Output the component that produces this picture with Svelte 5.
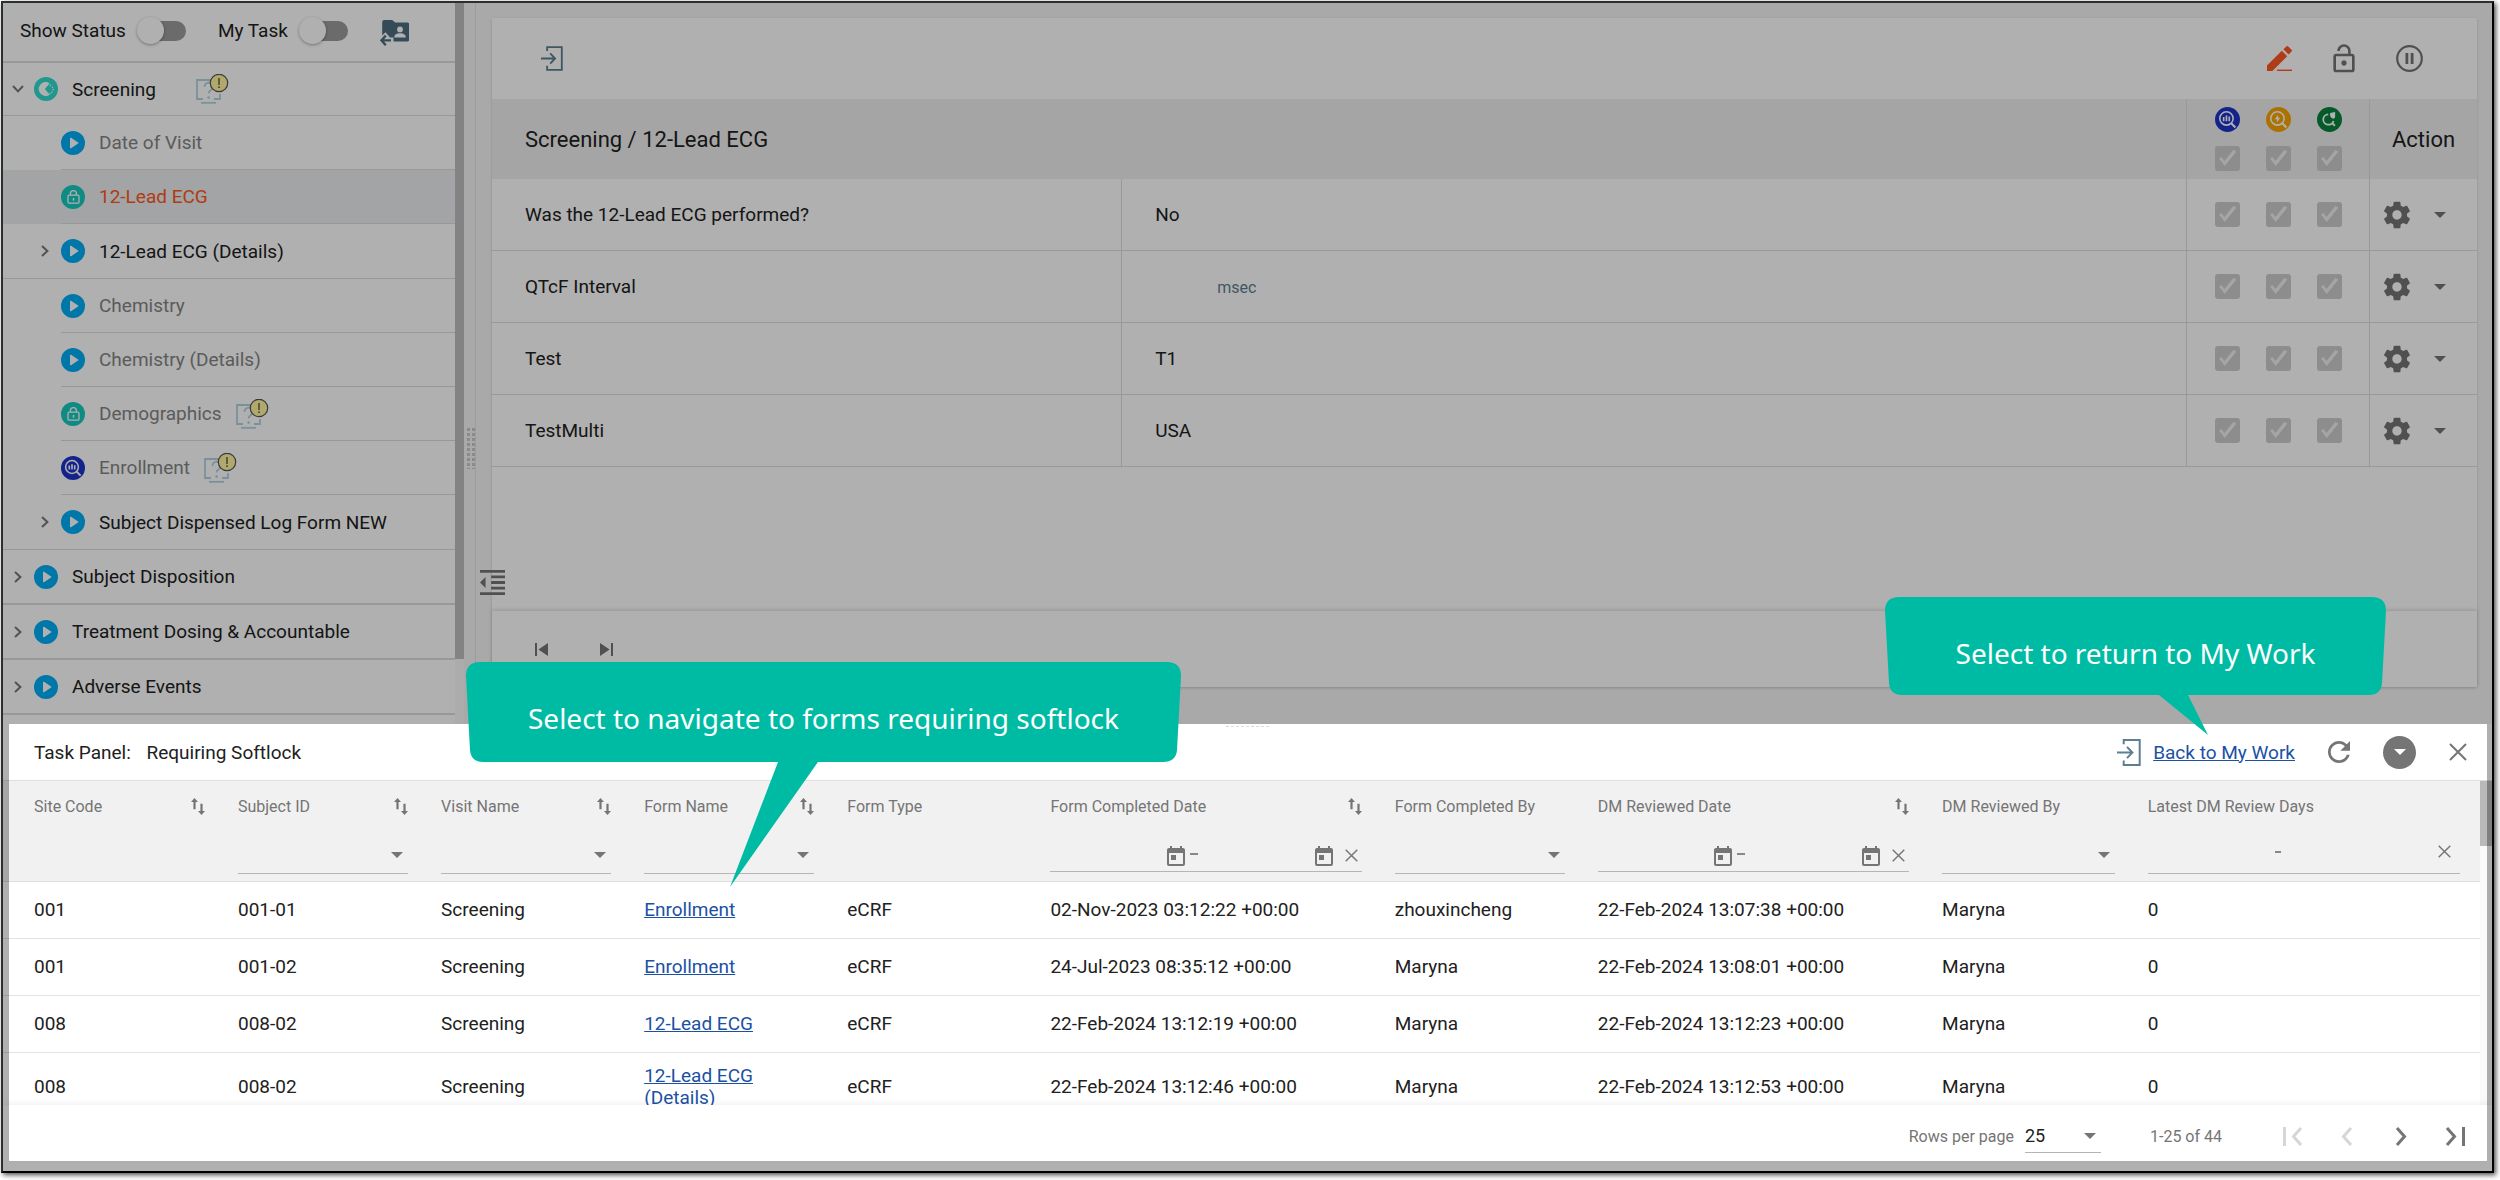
<script lang="ts">
	type Status = 'play' | 'lock' | 'partial' | 'review' | 'verify' | 'sign';

	interface TreeNode {
		label: string;
		status: Status;
		level: number;
		toggle?: 'open' | 'closed';
		query?: boolean;
		active?: boolean;
	}

	interface Column {
		label: string;
		width: string;
		sort?: boolean;
		filter?: 'select' | 'date' | 'range';
	}

	const tree: TreeNode[] = [
		{ label: 'Screening', status: 'partial', level: 0, toggle: 'open', query: true },
		{ label: 'Date of Visit', status: 'play', level: 1 },
		{ label: '12-Lead ECG', status: 'lock', level: 1, active: true },
		{ label: '12-Lead ECG (Details)', status: 'play', level: 1, toggle: 'closed' },
		{ label: 'Chemistry', status: 'play', level: 1 },
		{ label: 'Chemistry (Details)', status: 'play', level: 1 },
		{ label: 'Demographics', status: 'lock', level: 1, query: true },
		{ label: 'Enrollment', status: 'review', level: 1, query: true },
		{ label: 'Subject Dispensed Log Form NEW', status: 'play', level: 1, toggle: 'closed' },
		{ label: 'Subject Disposition', status: 'play', level: 0, toggle: 'closed' },
		{ label: 'Treatment Dosing & Accountable', status: 'play', level: 0, toggle: 'closed' },
		{ label: 'Adverse Events', status: 'play', level: 0, toggle: 'closed' }
	];

	const reviews: { status: Status; name: string }[] = [
		{ status: 'review', name: 'Data review' },
		{ status: 'verify', name: 'Source verification' },
		{ status: 'sign', name: 'Medical review' }
	];

	const fields = [
		{ label: 'Was the 12-Lead ECG performed?', value: 'No' },
		{ label: 'QTcF Interval', value: '', unit: 'msec' },
		{ label: 'Test', value: 'T1' },
		{ label: 'TestMulti', value: 'USA' }
	];

	const columns: Column[] = [
		{ label: 'Site Code', width: '8.8%', sort: true },
		{ label: 'Subject ID', width: '8.2%', sort: true, filter: 'select' },
		{ label: 'Visit Name', width: '8.2%', sort: true, filter: 'select' },
		{ label: 'Form Name', width: '8.2%', sort: true, filter: 'select' },
		{ label: 'Form Type', width: '8.2%' },
		{ label: 'Form Completed Date', width: '13.9%', sort: true, filter: 'date' },
		{ label: 'Form Completed By', width: '8.2%', filter: 'select' },
		{ label: 'DM Reviewed Date', width: '13.9%', sort: true, filter: 'date' },
		{ label: 'DM Reviewed By', width: '8.3%', filter: 'select' },
		{ label: 'Latest DM Review Days', width: '14.1%', filter: 'range' }
	];

	const tasks = [
		['001', '001-01', 'Screening', 'Enrollment', 'eCRF', '02-Nov-2023 03:12:22 +00:00', 'zhouxincheng', '22-Feb-2024 13:07:38 +00:00', 'Maryna', '0'],
		['001', '001-02', 'Screening', 'Enrollment', 'eCRF', '24-Jul-2023 08:35:12 +00:00', 'Maryna', '22-Feb-2024 13:08:01 +00:00', 'Maryna', '0'],
		['008', '008-02', 'Screening', '12-Lead ECG', 'eCRF', '22-Feb-2024 13:12:19 +00:00', 'Maryna', '22-Feb-2024 13:12:23 +00:00', 'Maryna', '0'],
		['008', '008-02', 'Screening', '12-Lead ECG (Details)', 'eCRF', '22-Feb-2024 13:12:46 +00:00', 'Maryna', '22-Feb-2024 13:12:53 +00:00', 'Maryna', '0']
	];

	const FORM_NAME = 3;

	let showStatus = $state(false);
	let myTask = $state(false);
	let pageSize = $state('25');
</script>

{#snippet statusIcon(status: Status)}
	<svg class="status" viewBox="0 0 24 24" aria-hidden="true">
		{#if status === 'play'}
			<circle cx="12" cy="12" r="12" fill="#00adf5" />
			<path d="M9.7 7.4v9.2l7-4.6z" fill="#fff" stroke="#fff" stroke-width="1.4" stroke-linejoin="round" />
		{:else if status === 'lock'}
			<circle cx="12" cy="12" r="12" fill="#16cabf" />
			<rect x="7" y="10.2" width="11" height="8" rx="1.2" fill="none" stroke="#fff" stroke-width="1.3" />
			<path d="M9.4 10V8.6a3 3 0 0 1 6 0V10" fill="none" stroke="#fff" stroke-width="1.3" />
			<path d="M12.5 13v2.6" stroke="#fff" stroke-width="1.5" />
		{:else if status === 'partial'}
			<circle cx="12" cy="12" r="12" fill="#2fdccd" />
			<path d="M15.6 6.2A7 7 0 1 0 15.6 17.8L11 12z" fill="#fff" />
			<path d="M11 12l6-5v10z" fill="#2fdccd" />
			<g fill="#fff">
				<circle cx="16.2" cy="8.2" r=".8" /><circle cx="18.4" cy="10.2" r=".8" /><circle cx="19.2" cy="12.6" r=".8" />
				<circle cx="18" cy="15" r=".8" /><circle cx="16" cy="16.6" r=".8" />
			</g>
		{:else if status === 'review'}
			<circle cx="12" cy="12" r="12" fill="#1d34ca" />
			<circle cx="11" cy="11" r="6.4" fill="none" stroke="#fff" stroke-width="1.5" />
			<path d="M15.6 15.6l4 4" stroke="#fff" stroke-width="2" />
			<path d="M8.3 9.6v4M11 8.2v5.4M13.7 9.2v4.4" stroke="#fff" stroke-width="1.6" />
		{:else if status === 'verify'}
			<circle cx="12" cy="12" r="12" fill="#faa500" />
			<circle cx="11" cy="11" r="6.4" fill="none" stroke="#fff" stroke-width="1.5" />
			<path d="M15.6 15.6l4 4" stroke="#fff" stroke-width="2" />
			<path d="M11.6 7.4l-3.2 4.4h2v3.2l3.2-4.6h-2z" fill="#fff" />
		{:else}
			<circle cx="12" cy="12" r="12" fill="#09833e" />
			<path d="M10.8 7a5 5 0 1 0 5 6.4" fill="none" stroke="#fff" stroke-width="1.7" />
			<path d="M14.6 15.4l2.6 2.6" stroke="#fff" stroke-width="1.8" />
			<path d="M12.6 5.8l4.8-.9 0 4.6a3 3 0 0 1-1.8 1.8 4 4 0 0 1-3-2.6z" fill="#fff" />
		{/if}
	</svg>
{/snippet}

{#snippet queryIcon()}
	<svg class="query" viewBox="0 0 33 30" aria-hidden="true">
		<path d="M14 6H1v19h6M18 25h6v-5M24 20v5" fill="none" stroke="#b2d3df" stroke-width="1.8" />
		<path d="M8.6 13a4 4 0 1 1 6 3.2q-2 1.2-2 3.4" fill="none" stroke="#b2d3df" stroke-width="1.7" />
		<circle cx="12.6" cy="23.6" r="1.3" fill="#b2d3df" />
		<path d="M5 28.8h15" stroke="#b2d3df" stroke-width="1.8" />
		<circle cx="23" cy="9" r="8.7" fill="#fff59b" stroke="#555" stroke-width="1.2" />
		<path d="M23 4v7" stroke="#555" stroke-width="1.4" />
		<circle cx="23" cy="13.2" r=".9" fill="#555" />
	</svg>
{/snippet}

{#snippet enterIcon()}
	<svg viewBox="0 0 24 27" aria-hidden="true" fill="none" stroke="#5d7f8f" stroke-width="2">
		<path d="M6.7 5.2V1.1h16v24.8h-16v-4.4" />
		<path d="M0 13.5h15M10 7.9l5.4 5.6L10 19.1" />
	</svg>
{/snippet}

{#snippet caret()}
	<svg class="caret" viewBox="0 0 12 6" aria-hidden="true"><path d="M0 0h12L6 6z" fill="currentColor" /></svg>
{/snippet}

{#snippet cross()}
	<svg class="cross" viewBox="0 0 18 18" aria-hidden="true">
		<path d="M1 1l16 16M17 1L1 17" fill="none" stroke="currentColor" stroke-width="2" />
	</svg>
{/snippet}

{#snippet calendar()}
	<svg class="calendar" viewBox="3 1 18 20" aria-hidden="true">
		<path
			fill="currentColor"
			d="M19 3h-1V1h-2v2H8V1H6v2H5c-1.11 0-1.99.9-1.99 2L3 19c0 1.1.89 2 2 2h14c1.1 0 2-.9 2-2V5c0-1.1-.9-2-2-2zm0 16H5V8h14v11zM7 10h5v5H7z"
		/>
	</svg>
{/snippet}

<div class="page">
	<div class="frame">
		<div class="workspace">
			<aside class="sidebar">
				<div class="switches">
					<label class="switch">Show Status <input type="checkbox" role="switch" bind:checked={showStatus} /></label>
					<label class="switch">My Task <input type="checkbox" role="switch" bind:checked={myTask} /></label>
					<button class="subject" aria-label="Back to subjects">
						<svg viewBox="0 0 29 27" aria-hidden="true">
							<path
								fill="#4d6f80"
								d="M4.2 0h8l3 2.4h12a2 2 0 0 1 2 2v15a2 2 0 0 1-2 2H13.5v-4H10l-4.5-5.2-3.3 3.4V2a2 2 0 0 1 2-2z"
							/>
							<circle cx="20" cy="9.4" r="2.9" fill="#fff" />
							<path d="M14.2 17.6c0-3.4 2.8-4.4 5.8-4.4s5.8 1 5.8 4.4z" fill="#fff" />
							<path d="M5.8 15.6L1.4 20.4l4.4 4.8M1.4 20.4H11" fill="none" stroke="#fff" stroke-width="4.4" />
							<path d="M5.8 15.6L1.4 20.4l4.4 4.8M1.4 20.4H11" fill="none" stroke="#4d6f80" stroke-width="2.3" />
						</svg>
					</button>
				</div>
				<ul class="tree">
					{#each tree as node}
						<li class="node level-{node.level}" class:active={node.active} class:group={node.toggle} class:open={node.toggle === 'open'}>
							<span class="twisty">
								{#if node.toggle}
									<button aria-label="Toggle {node.label}">
										<svg viewBox="0 0 8 12" class:down={node.toggle === 'open'} aria-hidden="true">
											<path d="M1 1l5.4 5L1 11" fill="none" stroke="#777" stroke-width="2" />
										</svg>
									</button>
								{/if}
							</span>
							<button class="entry">
								{@render statusIcon(node.status)}
								<span class="name">{node.label}</span>
								{#if node.query}{@render queryIcon()}{/if}
							</button>
						</li>
					{/each}
				</ul>
			</aside>
			<div class="side-scroll"><div></div></div>
			<div class="splitter"><div class="grip"></div></div>

			<main>
				<button class="collapse" aria-label="Collapse navigation">
					<svg viewBox="3 3 18 18" aria-hidden="true">
						<path fill="#757575" d="M11 17h10v-2H11v2zm-8-5l4 4V8l-4 4zm0 9h18v-2H3v2zM3 3v2h18V3H3zm8 6h10V7H11v2zm0 4h10v-2H11v2z" />
					</svg>
				</button>
				<section class="card">
					<div class="toolbar">
						<button class="enter" aria-label="Exit form">{@render enterIcon()}</button>
						<div class="tools">
							<button aria-label="Edit">
								<svg width="25" height="25" viewBox="0 0 25 25" aria-hidden="true">
									<path fill="#ff5722" d="M0 25v-5.6L14.8 4.8l5.4 5.4L5.4 25zM16.4 3.3L19.6.3q.7-.5 1.4 0l3.8 3.8q.4.6 0 1.2l-3.2 3.2z" />
									<path d="M10 24.3h15" stroke="#ff5722" stroke-width="1.4" />
								</svg>
							</button>
							<button aria-label="Unlock">
								<svg width="32" height="32" viewBox="0 0 24 24" aria-hidden="true">
									<path
										fill="#757575"
										d="M12 17c1.1 0 2-.9 2-2s-.9-2-2-2-2 .9-2 2 .9 2 2 2zm6-9h-1V6c0-2.76-2.24-5-5-5S7 3.24 7 6h1.9c0-1.71 1.39-3.1 3.1-3.1 1.71 0 3.1 1.39 3.1 3.1v2H6c-1.1 0-2 .9-2 2v10c0 1.1.9 2 2 2h12c1.1 0 2-.9 2-2V10c0-1.1-.9-2-2-2zm0 12H6V10h12v10z"
									/>
								</svg>
							</button>
							<button aria-label="Pause">
								<svg width="27" height="27" viewBox="0 0 27 27" aria-hidden="true" fill="none" stroke="#757575">
									<circle cx="13.5" cy="13.5" r="12.3" stroke-width="2.2" />
									<path d="M10.9 8v11M16.1 8v11" stroke-width="2.8" />
								</svg>
							</button>
						</div>
					</div>

					<table class="form">
						<colgroup>
							<col class="c-label" />
							<col />
							<col class="c-checks" />
							<col class="c-action" />
						</colgroup>
						<thead>
							<tr>
								<th colspan="2" scope="col">Screening / 12-Lead ECG</th>
								<th scope="col" class="checks">
									<div class="trio icons">
										{#each reviews as review}{@render statusIcon(review.status)}{/each}
									</div>
									<div class="trio">
										{#each reviews as review}
											<input type="checkbox" checked disabled aria-label="{review.name}, all fields" />
										{/each}
									</div>
								</th>
								<th scope="col" class="action">Action</th>
							</tr>
						</thead>
						<tbody>
							{#each fields as field}
								<tr>
									<td>{field.label}</td>
									<td class="value">{field.value}{#if field.unit}<span class="unit">{field.unit}</span>{/if}</td>
									<td class="checks">
										<div class="trio">
											{#each reviews as review}
												<input type="checkbox" checked disabled aria-label="{review.name}, {field.label}" />
											{/each}
										</div>
									</td>
									<td class="actions">
										<div class="gear">
											<button aria-label="Settings for {field.label}">
												<svg width="32" height="32" viewBox="0 0 24 24" aria-hidden="true">
													<path
														fill="#757575"
														d="M19.43 12.98c.04-.32.07-.64.07-.98s-.03-.66-.07-.98l2.11-1.65c.19-.15.24-.42.12-.64l-2-3.46c-.12-.22-.39-.3-.61-.22l-2.49 1c-.52-.4-1.08-.73-1.69-.98l-.38-2.65C14.46 2.18 14.25 2 14 2h-4c-.25 0-.46.18-.49.42l-.38 2.65c-.61.25-1.17.59-1.69.98l-2.49-1c-.23-.09-.49 0-.61.22l-2 3.46c-.13.22-.07.49.12.64l2.11 1.65c-.04.32-.07.65-.07.98s.03.66.07.98l-2.11 1.65c-.19.15-.24.42-.12.64l2 3.46c.12.22.39.3.61.22l2.49-1c.52.4 1.08.73 1.69.98l.38 2.65c.03.24.24.42.49.42h4c.25 0 .46-.18.49-.42l.38-2.65c.61-.25 1.17-.59 1.69-.98l2.49 1c.23.09.49 0 .61-.22l2-3.46c.12-.22.07-.49-.12-.64l-2.11-1.65zM12 15.5c-1.93 0-3.5-1.57-3.5-3.5s1.57-3.5 3.5-3.5 3.5 1.57 3.5 3.5-1.57 3.5-3.5 3.5z"
													/>
												</svg>
											</button>
											<button aria-label="More for {field.label}">{@render caret()}</button>
										</div>
									</td>
								</tr>
							{/each}
						</tbody>
					</table>

					<div class="card-footer">
						<button aria-label="Previous form">
							<svg width="13" height="13" viewBox="0 0 13 13" aria-hidden="true"><path fill="#757575" d="M0 0h2v13H0zM13 0v13L3.4 6.5z" /></svg>
						</button>
						<button aria-label="Next form">
							<svg width="13" height="13" viewBox="0 0 13 13" aria-hidden="true"><path fill="#757575" d="M11 0h2v13h-2zM0 0v13l9.6-6.5z" /></svg>
						</button>
					</div>
				</section>
			</main>
		</div>

		<section class="task-panel">
			<div class="handle"></div>
			<header>
				<h2>Task Panel: <span>Requiring Softlock</span></h2>
				<div class="panel-tools">
					<a class="back" href="#my-work">{@render enterIcon()}<span>Back to My Work</span></a>
					<button aria-label="Refresh">
						<svg width="22" height="22" viewBox="4 4 16 16" aria-hidden="true">
							<path
								fill="#757575"
								d="M17.65 6.35C16.2 4.9 14.21 4 12 4c-4.42 0-7.99 3.58-7.99 8s3.57 8 7.99 8c3.73 0 6.84-2.55 7.73-6h-2.08c-.82 2.33-3.04 4-5.65 4-3.31 0-6-2.69-6-6s2.69-6 6-6c1.66 0 3.14.69 4.22 1.78L13 11h7V4l-2.35 2.35z"
							/>
						</svg>
					</button>
					<button class="minimize" aria-label="Minimize">{@render caret()}</button>
					<button aria-label="Close">{@render cross()}</button>
				</div>
			</header>

			<div class="table-area">
				<div class="table-clip">
					<table class="tasks">
						<colgroup>
							{#each columns as column}<col style:width={column.width} />{/each}
						</colgroup>
						<thead>
							<tr>
								{#each columns as column}
									<th scope="col">
										<div class="head">
											<span>{column.label}</span>
											{#if column.sort}
												<button aria-label="Sort by {column.label}">
													<svg width="14" height="17" viewBox="0 0 14 17" aria-hidden="true">
														<path fill="#757575" d="M3.5 0L7 4H4.6v7.2H2.4V4H0zM10.5 17L7 13h2.4V5.8h2.2V13H14z" />
													</svg>
												</button>
											{/if}
										</div>
										<div class="filter">
											{#if column.filter === 'select'}
												<div class="line">
													<select aria-label="Filter {column.label}"><option></option></select>
													{@render caret()}
												</div>
											{:else if column.filter === 'date'}
												<div class="line date">
													<input type="text" aria-label="{column.label} from" />
													<button aria-label="Pick start date">{@render calendar()}</button>
													<i class="dash"></i>
													<input type="text" aria-label="{column.label} to" />
													<button aria-label="Pick end date">{@render calendar()}</button>
													<button class="clear" aria-label="Clear {column.label}">{@render cross()}</button>
												</div>
											{:else if column.filter === 'range'}
												<div class="line range">
													<input class="min" type="text" aria-label="{column.label} min" />
													<i class="dash"></i>
													<input type="text" aria-label="{column.label} max" />
													<button class="clear" aria-label="Clear {column.label}">{@render cross()}</button>
												</div>
											{/if}
										</div>
									</th>
								{/each}
							</tr>
						</thead>
						<tbody>
							{#each tasks as task}
								<tr>
									{#each task as cell, i}
										<td>{#if i === FORM_NAME}<a href="#form">{cell}</a>{:else}{cell}{/if}</td>
									{/each}
								</tr>
							{/each}
						</tbody>
					</table>
				</div>
				<div class="panel-scroll"><div></div></div>
			</div>

			<footer>
				<label class="page-size">
					Rows per page
					<span class="line">
						<select bind:value={pageSize}>
							<option>25</option>
							<option>50</option>
						</select>
						{@render caret()}
					</span>
				</label>
				<span class="range-text">1-25 of 44</span>
				<nav class="pager">
					<button disabled aria-label="First page">
						<svg width="20" height="19" viewBox="0 0 20 19" aria-hidden="true"><path d="M1.5 0v19M18 1L10.5 9.5 18 18" /></svg>
					</button>
					<button disabled aria-label="Previous page">
						<svg width="12" height="19" viewBox="0 0 12 19" aria-hidden="true"><path d="M10 1L2.5 9.5 10 18" /></svg>
					</button>
					<button aria-label="Next page">
						<svg width="12" height="19" viewBox="0 0 12 19" aria-hidden="true"><path d="M2 1l7.5 8.5L2 18" /></svg>
					</button>
					<button aria-label="Last page">
						<svg width="20" height="19" viewBox="0 0 20 19" aria-hidden="true"><path d="M2 1l7.5 8.5L2 18M18.5 0v19" /></svg>
					</button>
				</nav>
			</footer>
			<div class="spotlight"></div>
		</section>

		<div class="callout forms">
			<svg width="715" height="225" viewBox="0 0 715 225" aria-hidden="true">
				<path d="M14 0H701Q715 0 715 14L711 88Q710 100 697 100H352L264 225 312 100H17Q5 100 4 88L0 14Q0 0 14 0z" />
			</svg>
			<p>Select to navigate to forms requiring softlock</p>
		</div>
		<div class="callout work">
			<svg width="501" height="138" viewBox="0 0 501 138" aria-hidden="true">
				<path d="M14 0H487Q501 0 501 14L497 86Q496 98 484 98H303L323 138 274 98H17Q5 98 4 86L0 14Q0 0 14 0z" />
			</svg>
			<p>Select to return to My Work</p>
		</div>
	</div>
</div>

<style>
	:global(body) {
		margin: 0;
		background: #fff;
	}

	.page {
		box-sizing: border-box;
		min-height: 100vh;
		padding: 1px 6px 7px 1px;
		display: flex;
		font-family: Roboto, 'Liberation Sans', sans-serif;
		font-size: 19px;
		color: #212121;
	}

	.page :global(*) {
		box-sizing: border-box;
	}

	.frame {
		position: relative;
		flex: 1;
		min-width: 0;
		display: flex;
		flex-direction: column;
		overflow: hidden;
		border: 2px solid #000;
		border-top-color: #2b302f;
		border-left-color: #2b302f;
		background: #f5f5f5;
		box-shadow: 2px 2px 5px rgba(0, 0, 0, 0.7);
	}

	button {
		display: inline-flex;
		align-items: center;
		justify-content: center;
		padding: 0;
		border: 0;
		background: none;
		color: #757575;
		font: inherit;
	}

	svg {
		display: block;
		flex-shrink: 0;
	}

	.caret {
		width: 12px;
		height: 6px;
	}

	.cross {
		width: 18px;
		height: 18px;
	}

	.calendar {
		width: 18px;
		height: 20px;
	}

	.status {
		width: 24px;
		height: 24px;
	}

	/* workspace */
	.workspace {
		flex: 1;
		display: flex;
	}

	.sidebar {
		width: 452px;
		flex-shrink: 0;
		background: #fff;
	}

	.switches {
		display: flex;
		align-items: center;
		height: 60px;
		padding: 0 0 3px 17px;
		border-bottom: 2px solid #dedede;
	}

	.switch {
		display: flex;
		align-items: center;
		gap: 11px;
		margin-right: 32px;
		white-space: nowrap;
	}

	.switch input {
		appearance: none;
		position: relative;
		width: 49px;
		height: 28px;
		margin: 0;
	}

	.switch input::before {
		content: '';
		position: absolute;
		inset: 4px 0 4px 7px;
		border-radius: 10px;
		background: #9b9b9b;
	}

	.switch input::after {
		content: '';
		position: absolute;
		left: 0;
		top: 0;
		width: 27px;
		height: 27px;
		border-radius: 50%;
		background: #fff;
		box-shadow: 0 1px 3px rgba(0, 0, 0, 0.35);
	}

	.subject {
		padding-top: 6px;
	}

	.subject svg {
		width: 29px;
		height: 27px;
	}

	.tree {
		list-style: none;
		margin: 0;
		padding: 0;
	}

	.node {
		display: flex;
		height: 54px;
	}

	.twisty {
		display: flex;
		align-items: center;
		justify-content: center;
		width: 31px;
		padding-right: 1px;
		flex-shrink: 0;
	}

	.level-1 .twisty {
		width: 58px;
		padding-left: 26px;
	}

	.twisty svg {
		width: 8px;
		height: 12px;
	}

	.twisty svg.down {
		transform: rotate(90deg);
	}

	.entry {
		flex: 1;
		justify-content: flex-start;
		gap: 14px;
		border-bottom: 1px solid #dcdcdc;
		color: #858585;
	}

	.group {
		height: 55px;
		border-bottom: 1px solid #dcdcdc;
	}

	.group .entry {
		border-bottom: 0;
		color: #212121;
	}

	.level-0 {
		border-bottom-width: 2px;
	}

	.level-0.open {
		height: 53px;
		border-bottom-width: 1px;
	}

	.open .query {
		margin-left: 26px;
	}

	.active {
		background: #ebeef0;
	}

	.active .entry {
		color: #ff5722;
	}

	.query {
		width: 33px;
		height: 30px;
	}

	.side-scroll {
		width: 9px;
		background: #fafafa;
	}

	.side-scroll div {
		height: 91%;
		background: #bebebe;
	}

	.splitter {
		width: 12px;
		flex-shrink: 0;
		padding: 425px 0 0 3px;
		border-right: 1px solid #e2e2e2;
	}

	.grip {
		width: 8px;
		height: 41px;
		background: repeating-linear-gradient(#f5f5f5 0 0) center / 2px 100% no-repeat,
			repeating-linear-gradient(#c8c8c8 0 3px, transparent 3px 5px);
	}

	main {
		position: relative;
		flex: 1;
		min-width: 0;
		display: flex;
		padding: 15px 15px 37px 16px;
	}

	.collapse {
		position: absolute;
		left: 4px;
		top: 567px;
	}

	.collapse svg {
		width: 25px;
		height: 25px;
	}

	.card {
		flex: 1;
		min-width: 0;
		display: flex;
		flex-direction: column;
		background: #fff;
		box-shadow: 0 1px 3px rgba(0, 0, 0, 0.15);
	}

	.toolbar {
		display: flex;
		align-items: center;
		justify-content: space-between;
		height: 81px;
		padding: 0 54px 0 49px;
	}

	.enter svg {
		width: 22px;
		height: 25px;
	}

	.tools {
		display: flex;
		align-items: center;
		gap: 36px;
	}

	.form {
		width: 100%;
		table-layout: fixed;
		border-collapse: separate;
		border-spacing: 0;
	}

	.c-label {
		width: 31.7%;
	}

	.c-checks {
		width: 183px;
	}

	.c-action {
		width: 108px;
	}

	.form th {
		height: 80px;
		padding: 0 0 0 33px;
		background: #f0f0f0;
		font-size: 22px;
		font-weight: 400;
		text-align: left;
	}

	.form td {
		height: 72px;
		padding: 0 0 0 33px;
		border-bottom: 1px solid #dedede;
	}

	.form .value {
		border-left: 1px solid #dedede;
	}

	.unit {
		margin-left: 62px;
		font-size: 16px;
		color: #5d7f8f;
	}

	.form .checks {
		padding: 0 0 0 28px;
		border-left: 1px solid #dedede;
	}

	.trio {
		display: flex;
		gap: 26px;
	}

	.trio .status {
		width: 25px;
		height: 25px;
	}

	.icons {
		margin-bottom: 14px;
	}

	.trio input {
		appearance: none;
		width: 25px;
		height: 25px;
		margin: 0;
		border-radius: 3px;
		background: #cdcdcd;
	}

	.trio input::after {
		content: '';
		display: block;
		width: 25px;
		height: 25px;
		background: #f0f0f0;
		clip-path: polygon(16% 50%, 26% 44%, 38% 60%, 74% 15%, 85% 23%, 39% 80%);
	}

	.form .action {
		padding: 0 0 0 22px;
		border-left: 1px solid #dedede;
	}

	.form .actions {
		padding: 0 0 0 11px;
		border-left: 1px solid #dedede;
	}

	.gear {
		display: flex;
		align-items: center;
		gap: 21px;
	}

	.card-footer {
		display: flex;
		align-items: center;
		gap: 52px;
		height: 76px;
		margin-top: auto;
		padding-left: 43px;
		box-shadow: 0 -1px 4px rgba(0, 0, 0, 0.16);
	}

	/* task panel */
	.task-panel {
		position: relative;
		padding-bottom: 10px;
		background: #fff;
	}

	.spotlight {
		position: absolute;
		inset: 0 5px 10px 6px;
		box-shadow: 0 0 0 3000px rgba(0, 0, 0, 0.31);
		pointer-events: none;
	}

	.handle {
		position: absolute;
		left: 1223px;
		top: 2px;
		width: 44px;
		height: 1px;
		background: repeating-linear-gradient(90deg, #dcdcdc 0 3px, transparent 3px 5px);
	}

	.task-panel header {
		display: flex;
		align-items: center;
		justify-content: space-between;
		height: 57px;
		padding: 0 25px 0 31px;
		border-bottom: 1px solid #dedede;
	}

	h2 {
		margin: 0;
		font-size: 19px;
		font-weight: 400;
	}

	h2 span {
		margin-left: 11px;
	}

	.panel-tools {
		display: flex;
		align-items: center;
		gap: 33px;
	}

	a {
		color: #1b51a4;
		text-decoration: underline;
	}

	.back {
		display: flex;
		align-items: center;
		gap: 12px;
	}

	.back svg {
		width: 24px;
		height: 27px;
	}

	.minimize {
		width: 33px;
		height: 33px;
		border-radius: 50%;
		background: #757575;
		color: #fff;
	}

	.table-area {
		display: flex;
		height: 324px;
	}

	.table-clip {
		flex: 1;
		min-width: 0;
		overflow: hidden;
	}

	.panel-scroll {
		width: 12px;
		background: #fafafa;
	}

	.panel-scroll div {
		height: 20%;
		background: #b9b9b9;
	}

	.tasks {
		width: 100%;
		table-layout: fixed;
		border-collapse: separate;
		border-spacing: 0;
	}

	.tasks th {
		height: 101px;
		padding: 11px 16px 0 17px;
		vertical-align: top;
		background: #f1f1f1;
		border-bottom: 1px solid #dedede;
		color: #757575;
		font-size: 16px;
		font-weight: 400;
		text-align: left;
		white-space: nowrap;
	}

	.tasks td {
		height: 57px;
		padding: 0 16px 0 17px;
		border-bottom: 1px solid #e2e2e2;
		line-height: 22px;
	}

	.tasks tr > :first-child {
		padding-left: 31px;
	}

	.tasks tr > :last-child {
		padding-right: 20px;
	}

	.tasks tbody tr:last-child td {
		height: 68px;
	}

	.head {
		display: flex;
		align-items: center;
		justify-content: space-between;
		height: 28px;
	}

	.filter {
		display: flex;
		align-items: flex-end;
		height: 54px;
	}

	.line {
		position: relative;
		display: flex;
		align-items: center;
		width: 100%;
		height: 37px;
		border-bottom: 1px solid #b5b5b5;
		color: #757575;
	}

	.line select {
		appearance: none;
		width: 100%;
		height: 100%;
		padding: 0;
		border: 0;
		background: none;
		color: #212121;
		font: inherit;
		font-size: 19px;
	}

	.line .caret {
		position: absolute;
		right: 5px;
	}

	.line input {
		flex: 1;
		width: 0;
		min-width: 0;
		height: 30px;
		padding: 0;
		border: 0;
		background: none;
		font: inherit;
	}

	.date {
		margin-bottom: 2px;
		height: 32px;
	}

	.range {
		padding-right: 9px;
		height: 44px;
	}

	.line .min {
		flex: 0 0 42%;
	}

	.dash {
		width: 8px;
		height: 2px;
		background: #888;
	}

	.date .dash {
		margin: 0 0 4px 5px;
	}

	.range .dash {
		width: 6px;
	}

	.clear {
		margin-left: 12px;
	}

	.range .clear {
		margin-left: 0;
	}

	.clear .cross {
		width: 13px;
		height: 13px;
	}

	.date .clear {
		margin-right: 4px;
	}

	.task-panel footer {
		position: relative;
		display: flex;
		align-items: center;
		justify-content: flex-end;
		height: 56px;
		padding: 6px 10px 0 0;
		background: #fff;
		box-shadow: 0 -2px 6px rgba(0, 0, 0, 0.06);
		font-size: 16px;
		color: #757575;
	}

	.page-size {
		display: flex;
		align-items: center;
		gap: 11px;
	}

	.page-size .line {
		width: 76px;
		height: 34px;
	}

	.page-size select {
		font-size: 18px;
	}

	.range-text {
		margin: 0 44px 0 49px;
	}

	.pager {
		display: flex;
	}

	.pager button {
		width: 54px;
		height: 34px;
	}

	.pager path {
		fill: none;
		stroke: #757575;
		stroke-width: 3;
	}

	.pager button:disabled path {
		stroke: #d6d6d6;
	}

	/* callouts */
	.callout {
		position: absolute;
		z-index: 2;
		text-align: center;
	}

	.callout svg {
		position: absolute;
		left: 0;
		top: 0;
		fill: #00bba4;
	}

	.callout p {
		position: relative;
		margin: 0;
		padding-top: 36px;
		color: #fff;
		font-family: 'Noto Sans', 'Open Sans', sans-serif;
		font-size: 28px;
		line-height: 40px;
		white-space: nowrap;
	}

	.forms {
		left: 463px;
		top: 659px;
		width: 715px;
	}

	.work {
		right: 106px;
		top: 594px;
		width: 501px;
	}
</style>
